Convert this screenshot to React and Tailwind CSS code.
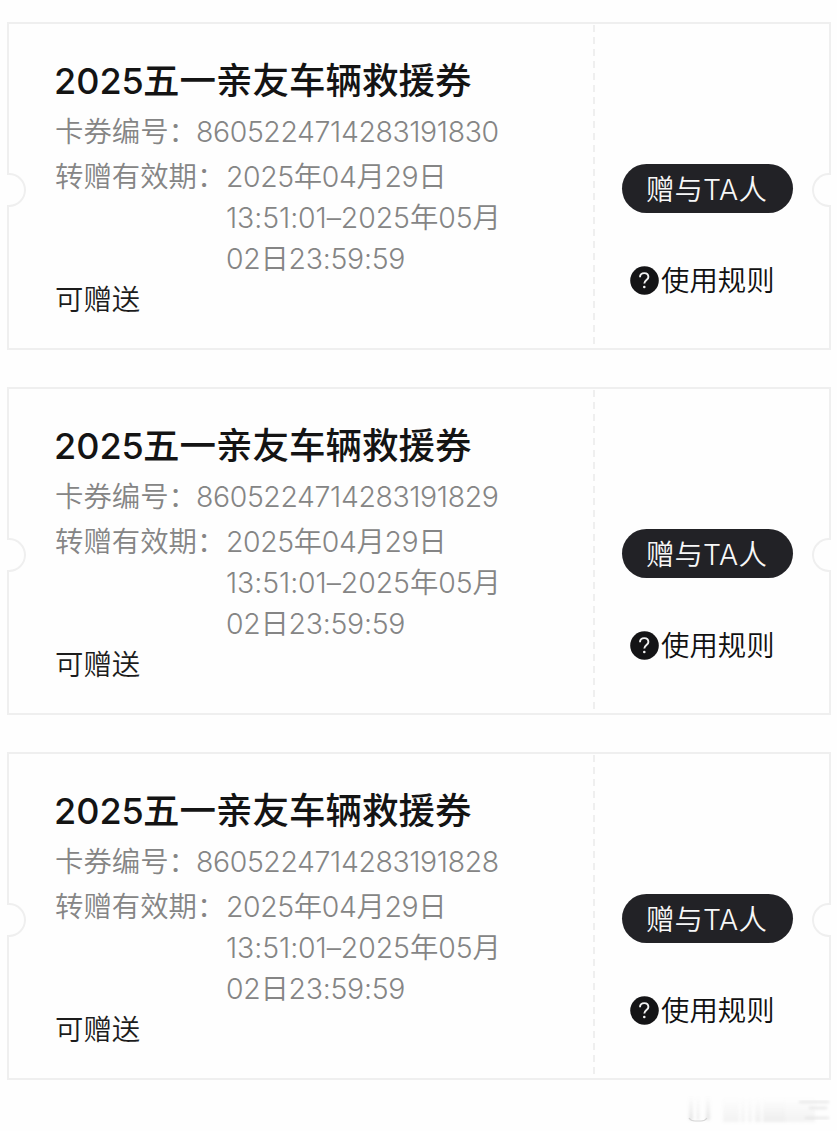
const coupons = [
  { id: 1, number: '8605224714283191830' },
  { id: 2, number: '8605224714283191829' },
  { id: 3, number: '8605224714283191828' },
];

function QuestionIcon() {
  return (
    <svg className="size-[29px] shrink-0" viewBox="0 0 29 29" fill="none">
      <circle cx="14.5" cy="14.5" r="14.3" fill="#141416" />
      <path
        d="M10 11.2C10 8.6 11.7 7.1 14.2 7.1s4.2 1.6 4.2 3.9c0 3-4.1 3.2-4.1 6.6"
        stroke="#f2f2f2"
        strokeWidth="1.9"
      />
      <circle cx="14.3" cy="21" r="1.3" fill="#f2f2f2" />
    </svg>
  );
}

function Coupon({ number }) {
  return (
    <article className="relative flex h-[328px] border-2 border-[#efefef] bg-[#fefefe]">
      <span className="absolute -left-[2px] top-[149px] h-[34px] w-[19px] rounded-r-full border-2 border-l-0 border-[#efefef] bg-[#fefefe]" />
      <span className="absolute -right-[2px] top-[149px] h-[34px] w-[19px] rounded-l-full border-2 border-r-0 border-[#efefef] bg-[#fefefe]" />

      <div className="w-[584px] pl-[45px] pt-[34px] whitespace-nowrap">
        <h2 className="h-[50px] text-[36.5px] leading-[46px] font-medium text-[#141414]">
          <span className="inline-block w-[89px] text-[36px] font-[450]">2025</span>五一亲友车辆救援券
        </h2>
        <div className="flex h-[45px] text-[28.4px] leading-[47px] font-[350] text-[#858585]">
          <span className="w-[142px] pl-px">卡券编号：</span>
          <span className="tracking-[-0.36px]">{number}</span>
        </div>
        <div className="flex text-[28.4px] leading-[41px] font-[350] text-[#858585]">
          <span className="w-[172px] pl-px pt-[3px]">转赠有效期：</span>
          <p className="pt-[3px] tracking-[-0.36px]">
            2025年04月29日
            <br />
            <span className="tracking-[-0.05px]">13:51:01–2025年05月</span>
            <br />
            <span className="tracking-[-0.25px]">02日23:59:59</span>
          </p>
        </div>
        <p className="pl-px text-[28.4px] leading-[41px] font-[350] text-[#1c1c1c]">可赠送</p>
      </div>

      <svg className="h-full w-[2px]" viewBox="0 0 2 324">
        <line x1="1" y1="1" x2="1" y2="324" stroke="#ececec" strokeWidth="1.6" strokeDasharray="7 5" />
      </svg>

      <div className="flex flex-1 flex-col items-start pl-[27px] pt-[140px] whitespace-nowrap">
        <button className="h-[49px] w-[171px] rounded-full bg-[#222226] pr-[2px] text-[28.4px] leading-[51px] font-[350] text-[#f8f8f8]">
          赠与<span className="tracking-[0.4px]">TA</span>人
        </button>
        <div className="mt-[47px] ml-[8px] flex h-[41px] items-center gap-[2px] text-[28.4px] leading-[43px] font-[350] text-[#111]">
          <QuestionIcon />
          <span>使用规则</span>
        </div>
      </div>
    </article>
  );
}

function Watermark() {
  return (
    <svg className="h-[36px] w-[150px]" viewBox="0 0 150 36">
      <defs>
        <filter id="soft" x="-10%" y="-10%" width="120%" height="120%">
          <feGaussianBlur stdDeviation="1.5" />
        </filter>
        <linearGradient id="fade" x1="0" y1="0" x2="0" y2="1">
          <stop offset="0" stopColor="#999" stopOpacity="0" />
          <stop offset="1" stopColor="#999" stopOpacity="0.24" />
        </linearGradient>
      </defs>
      <g filter="url(#soft)" fill="url(#fade)">
        <rect x="8" y="0" width="4" height="24" />
        <rect x="16" y="0" width="2" height="24" />
        <rect x="25" y="0" width="4" height="24" />
        <rect x="42" y="2" width="16" height="24" opacity=".5" />
        <rect x="60" y="2" width="4" height="24" opacity=".5" />
        <rect x="67" y="2" width="4" height="24" opacity=".5" />
        <rect x="74" y="2" width="6" height="24" opacity=".6" />
        <rect x="82" y="2" width="22" height="24" opacity=".7" />
        <rect x="104" y="2" width="30" height="24" opacity=".5" />
      </g>
      <path d="M8 22q2 3 6 3h6q4 0 6-3" fill="none" stroke="#d4d4d4" strokeWidth="1.2" />
      <g filter="url(#soft)" stroke="#e3e3e3" strokeWidth="2">
        <path d="M118 6h30M128 12h18M124 22h24" />
      </g>
    </svg>
  );
}

export default function App() {
  return (
    <main className="h-[1131px] overflow-hidden bg-[#fefefe] pl-[7px] pr-[6px] pt-[22px] font-[Inter,'Noto_Sans_CJK_SC',sans-serif]">
      <div className="flex flex-col gap-[37px]">
        {coupons.map((coupon) => (
          <Coupon key={coupon.id} number={coupon.number} />
        ))}
      </div>
      <div className="mt-[16px] flex justify-end">
        <Watermark />
      </div>
    </main>
  );
}
